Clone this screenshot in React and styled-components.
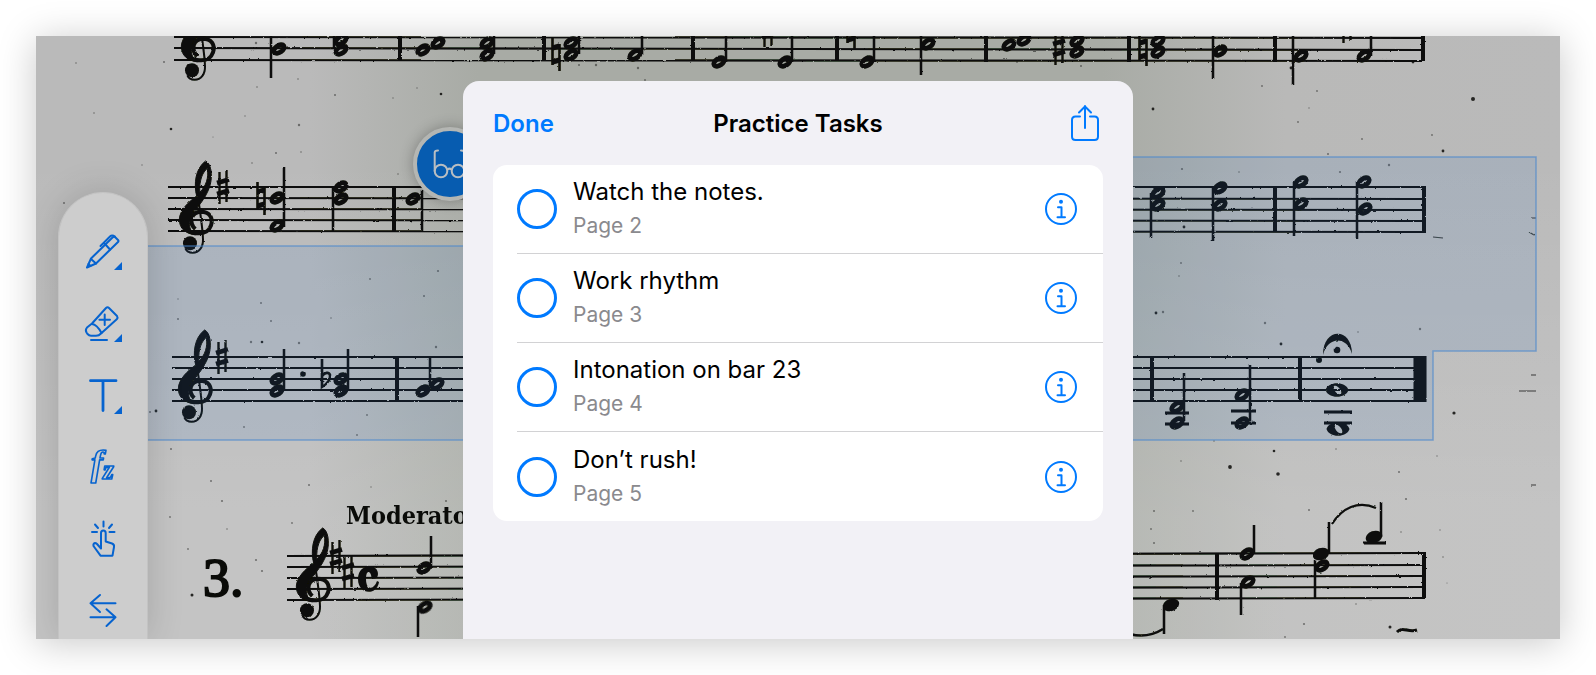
import React from "react";
import styled, { createGlobalStyle } from "styled-components";

const GlobalStyle = createGlobalStyle`
  *, *::before, *::after { box-sizing: border-box; }
  body {
    margin: 0;
    background: #ffffff;
    font-family: Inter, "Liberation Sans", sans-serif;
    -webkit-font-smoothing: antialiased;
  }
  button { font: inherit; border: 0; padding: 0; background: none; cursor: pointer; }
`;

const Page = styled.div`
  min-height: 100vh;
  padding: 36px;
  display: flex;
`;

const Screen = styled.main`
  position: relative;
  flex: 1;
  display: grid;
  grid-template-columns: 1fr minmax(0, 670px) 1fr;
  overflow: hidden;
  background:
    linear-gradient(180deg, rgba(255, 255, 255, 0) 20%, rgba(255, 255, 255, 0.15) 80%),
    linear-gradient(90deg, #bababa 0%, #bababa 18%, #a8aba5 29%, #a8aba5 70%, #b9b9b8 82%, #bababa 100%);
  box-shadow: 0 4px 36px rgba(0, 0, 0, 0.22);
`;

const Score = styled.svg`
  position: absolute;
  inset: 0;
  width: 100%;
  height: 100%;
`;

const Toolbar = styled.nav`
  position: relative;
  width: 90px;
  margin: 156px 0 0 22px;
  padding-top: 35px;
  display: flex;
  flex-direction: column;
  align-items: center;
  gap: 24px;
  background: #cdcdcd;
  border: 1px solid #c3c3c3;
  border-bottom: 0;
  border-radius: 45px 45px 0 0;
  box-shadow: 0 0 36px rgba(0, 0, 0, 0.16);
`;

const ToolButton = styled.button`
  width: 48px;
  height: 48px;
  flex: none;
  color: #0663cf;

  svg {
    display: block;
    overflow: visible;
    fill: none;
    stroke: currentColor;
    stroke-width: 2;
    stroke-linecap: round;
    stroke-linejoin: round;
  }
`;

const ViewBadge = styled.button`
  position: absolute;
  top: 91px;
  left: calc(50% - 385px);
  width: 74px;
  height: 74px;
  display: grid;
  place-items: center;
  border: 4px solid #b4b6b3;
  border-radius: 50%;
  background: #075cb0;
  box-shadow: 0 0 14px rgba(0, 0, 0, 0.28);
`;

const Dialog = styled.section`
  position: relative;
  grid-column: 2;
  margin-top: 45px;
  padding: 0 30px 118px;
  background: #f2f1f6;
  border-radius: 16px 16px 0 0;
`;

const DialogHeader = styled.header`
  height: 84px;
  display: grid;
  grid-template-columns: 1fr auto 1fr;
  align-items: center;
`;

const DialogTitle = styled.h1`
  margin: 0;
  font-size: 24px;
  line-height: 34px;
  padding-top: 2px;
  font-weight: 600;
  color: #000000;
`;

const DoneButton = styled.button`
  justify-self: start;
  font-size: 24px;
  line-height: 34px;
  padding-top: 2px;
  font-weight: 600;
  color: #007aff;
`;

const IconButton = styled.button`
  display: grid;
  place-items: center;
  justify-self: end;
  flex: none;
  width: 36px;
  height: 40px;
  color: #007aff;

  svg {
    display: block;
    fill: none;
    stroke: currentColor;
    stroke-width: 2;
    stroke-linecap: round;
    stroke-linejoin: round;
  }
`;

const TaskList = styled.ul`
  margin: 0;
  padding: 0 0 0 24px;
  list-style: none;
  background: #ffffff;
  border-radius: 14px;
`;

const TaskRow = styled.li`
  height: 89px;
  padding-right: 24px;
  display: flex;
  align-items: center;
  gap: 16px;

  &:not(:last-child) { border-bottom: 1px solid #d2d2d4; }
`;

const TaskCheck = styled.input`
  appearance: none;
  flex: none;
  width: 40px;
  height: 40px;
  margin: 0;
  border: 3px solid #007aff;
  border-radius: 50%;

  &:checked { background: #007aff; box-shadow: inset 0 0 0 4px #ffffff; }
`;

const TaskLabel = styled.label`
  flex: 1;
  display: flex;
  flex-direction: column;
`;

const TaskName = styled.span`
  font-size: 24px;
  line-height: 34px;
  color: #000000;
`;

const TaskPage = styled.span`
  font-size: 21px;
  line-height: 34px;
  color: #8a8a8e;
`;

/* ---------- sheet music ---------- */

const INK = "#0a0b08";

const Staff = ({ x1, x2, left, right }) =>
  left.map((y, i) => (
    <line key={i} x1={x1} x2={x2} y1={y} y2={right[i]} stroke={INK} strokeWidth="2.100" />
  ));

const Clef = ({ x, y }) => (
  <g transform={`translate(${x} ${y}) scale(.3333)`} fill="none" stroke={INK}>
    <path
      fill={INK}
      strokeWidth="3"
      fillRule="evenodd"
      d="M137 90C153 98 158 130 151 160C143 192 119 222 99 246C88 262 84 285 95 302L108 311C78 310 57 292 58 264C60 238 84 214 110 195C101 160 106 112 137 90ZM142 112C128 124 118 145 119 184C138 166 147 140 142 112Z"
    />
    <path strokeWidth="12" d="M106 294C86 277 92 243 122 242C150 242 160 262 153 283C147 300 138 306 118 307C100 308 90 303 84 297" />
    <path strokeWidth="6" d="M114 200C120 240 128 290 129 325C130 350 116 365 98 365C86 365 79 359 76 352" />
    <circle cx="90" cy="337" r="21" fill={INK} stroke="none" />
  </g>
);

const Sharp = ({ x, y }) => (
  <g transform={`translate(${x} ${y})`} stroke={INK}>
    <path strokeWidth="2.400" d="M-3.5 -15V17M3.5 -17V15" />
    <path strokeWidth="4.600" d="M-6 -4L6 -7.500M-6 7L6 3.500" />
  </g>
);

const Natural = ({ x, y }) => (
  <g transform={`translate(${x} ${y})`} stroke={INK}>
    <path strokeWidth="2.600" d="M-3.500 -16V11M3.500 -10V17" />
    <path strokeWidth="5" d="M-3.500 -6L3.500 -8M-3.500 8L3.500 6" />
  </g>
);

const Flat = ({ x, y }) => (
  <path transform={`translate(${x} ${y})`} fill="none" stroke={INK} strokeWidth="2.600" d="M-4 -17V11C1 8 5 3 4 -1C3 -4 -1 -4 -4 0" />
);

const Half = ({ x, y }) => (
  <ellipse rx="5.800" ry="3.400" fill="none" stroke={INK} strokeWidth="4.800" transform={`translate(${x} ${y}) rotate(-34)`} />
);

const Solid = ({ x, y }) => (
  <ellipse rx="8.500" ry="6" fill={INK} transform={`translate(${x} ${y}) rotate(-20)`} />
);

const Whole = ({ x, y }) => (
  <path
    transform={`translate(${x} ${y})`}
    fill={INK}
    fillRule="evenodd"
    d="M-11.500 0C-9 -9 9 -9 11.500 0C9 9 -9 9 -11.500 0ZM-3 -4C-5 -1 1 6 4 4C6 1 0 -6 -3 -4Z"
  />
);

const HALVES = [
  [279, 49], [341, 50], [341, 40], [423, 50], [438, 43], [487, 55], [487, 43], [571, 55], [571, 43],
  [635, 55], [719, 62], [785, 62], [867, 62], [928, 44], [1009, 45], [1024, 40], [1077, 52], [1077, 41],
  [1158, 52], [1158, 41], [1220, 51], [1301, 56], [1364, 56],
  [277, 198], [277, 226], [341, 187], [341, 199], [413, 199],
  [1158, 193], [1158, 205], [1220, 188], [1220, 205], [1301, 182], [1301, 204], [1364, 182], [1365, 209],
  [277, 379], [277, 391], [341, 379], [341, 391], [423, 391], [437, 384],
  [1177, 407], [1177, 423], [1242, 395], [1242, 423],
  [424, 568], [425, 607], [1247, 554], [1248, 582], [1322, 566],
];

const SOLIDS = [[1171, 605], [1321, 554], [1374, 537]];

/* x, top, bottom */
const STEMS = [
  [271, 36, 78], [334, 36, 49], [494, 36, 54], [579, 36, 54], [642, 36, 55], [726, 36, 62], [792, 36, 62],
  [874, 36, 62], [921, 36, 75], [1213, 36, 79], [1293, 36, 85], [1371, 36, 56], [284, 167, 227],
  [333, 187, 231], [422, 190, 231], [1151, 193, 238], [1213, 188, 241], [1294, 182, 236], [1357, 182, 239],
  [284, 349, 390], [348, 349, 391], [430, 357, 386], [1184, 373, 421], [1250, 365, 421],
  [431, 536, 567], [418, 606, 637], [1164, 605, 634], [1254, 525, 554], [1241, 583, 615],
  [1329, 522, 554], [1315, 560, 599], [1381, 502, 537],
];

const BARS = [
  [400, 36, 60], [544, 36, 61], [693, 36, 61], [837, 36, 61], [986, 36, 62], [1129, 36, 62], [1275, 36, 62],
  [1423, 36, 61], [394, 186, 232], [1275, 187, 232], [1424, 186, 232], [397, 357, 401], [1152, 356, 402],
  [1300, 356, 402], [1217, 553, 600], [1424, 553, 599],
];

/* x1, x2, y */
const LEDGERS = [
  [1165, 1189, 413], [1165, 1189, 424], [1231, 1256, 411], [1231, 1256, 423], [1324, 1352, 412],
  [1324, 1352, 423], [1363, 1386, 543],
];

/* x, y, radius */
const SPECKS = [
  [76, 63, 0.8], [164, 62, 1], [94, 113, 0.8], [171, 129, 1.3], [257, 87, 0.8], [298, 79, 0.8], [335, 95, 1],
  [299, 125, 1.2], [441, 94, 1.3], [276, 153, 1], [245, 116, 0.7], [252, 163, 0.8], [398, 174, 0.8],
  [142, 165, 0.7], [64, 203, 1], [213, 137, 0.6], [256, 43, 1.2], [417, 88, 0.7], [393, 98, 0.7], [301, 152, 0.8],
  [178, 319, 1], [178, 299, 0.7], [261, 303, 1], [271, 321, 1], [262, 342, 1.3], [251, 342, 1.2],
  [299, 343, 1.2], [370, 279, 0.9], [438, 271, 1.1], [424, 296, 1], [331, 318, 0.8], [436, 347, 1.2],
  [150, 412, 1], [156, 411, 1.4], [357, 435, 0.9], [244, 427, 0.9], [367, 415, 0.9], [171, 449, 1],
  [211, 481, 1], [222, 501, 1.1], [170, 517, 0.9], [192, 595, 1.5], [256, 560, 1.1], [262, 571, 1.1],
  [188, 549, 0.9], [227, 529, 0.8], [309, 485, 1], [292, 523, 0.9], [446, 501, 1.1], [371, 487, 0.7],
  [596, 65, 1.2], [579, 65, 1], [638, 68, 1.2], [645, 80, 0.9], [1017, 62, 0.9], [1081, 66, 1],
  [1153, 109, 1.4], [1473, 99, 2], [1291, 68, 1.4], [1413, 62, 1.4], [1317, 91, 0.9], [1262, 86, 0.9],
  [1298, 122, 0.9], [1309, 108, 0.7], [1432, 135, 0.9], [1328, 154, 1], [1362, 139, 0.9], [1389, 165, 1.2],
  [1182, 169, 1.1], [1340, 172, 1.1], [1184, 227, 1.4], [1443, 151, 1.4], [1239, 172, 0.8], [1181, 263, 0.9],
  [1179, 276, 0.8], [1156, 313, 1.4], [1163, 312, 1.2], [1265, 323, 1.2], [1420, 329, 1.2], [1281, 344, 1.4],
  [1358, 332, 0.8], [1454, 413, 1.6], [1274, 451, 1.3], [1230, 467, 1.9], [1278, 474, 1.8], [1399, 472, 1],
  [1336, 449, 0.8], [1437, 456, 0.7], [1154, 511, 1], [1193, 511, 0.9], [1151, 529, 0.9], [1309, 510, 1],
  [1406, 499, 1.1], [1401, 532, 0.8], [1154, 543, 1], [1304, 624, 1.1], [1390, 627, 1.5], [1356, 604, 0.8],
  [1440, 530, 0.7], [1443, 557, 0.8], [1447, 583, 0.6], [1285, 637, 0.9], [1214, 441, 0.8], [1181, 461, 0.8],
];

const SheetMusic = () => (
  <Score viewBox="36 36 1524 603" preserveAspectRatio="xMidYMid slice" role="img" aria-label="Sheet music">
    <defs>
      <filter id="press" x="36" y="20" width="1524" height="630" filterUnits="userSpaceOnUse">
        <feTurbulence type="fractalNoise" baseFrequency="0.3" numOctaves="2" seed="4" result="noise" />
        <feDisplacementMap in="SourceGraphic" in2="noise" scale="2" xChannelSelector="R" yChannelSelector="G" />
      </filter>
    </defs>
    <g filter="url(#press)">
      <Staff x1={174} x2={1424} left={[37, 48, 60]} right={[38, 50, 61]} />
      <Staff x1={168} x2={1426} left={[187, 198, 209, 220, 231]} right={[187, 199, 210, 221, 232]} />
      <Staff x1={172} x2={1426} left={[357, 368, 379, 390, 401]} right={[357, 368, 379, 390, 401]} />
      <Staff x1={287} x2={1426} left={[556, 567, 578, 589, 600]} right={[553, 565, 576, 587, 598]} />

      <Clef x={162} y={-42} />
      <Clef x={160} y={131} />
      <Clef x={159} y={300} />
      <Clef x={277} y={498} />

      <Sharp x={223} y={187} />
      <Sharp x={222} y={357} />
      <Sharp x={336} y={557} />
      <Sharp x={348} y={572} />
      <Sharp x={1059} y={48} />
      <Sharp x={768} y={30} />
      <Sharp x={1347} y={26} />
      <Natural x={261} y={198} />
      <Natural x={556} y={54} />
      <Natural x={851} y={32} />
      <Natural x={1143} y={49} />
      <Flat x={326} y={376} />

      {HALVES.map(([x, y], i) => <Half key={i} x={x} y={y} />)}
      {SOLIDS.map(([x, y], i) => <Solid key={i} x={x} y={y} />)}
      <Whole x={1337} y={390} />
      <Whole x={1338} y={429} />

      {STEMS.map(([x, a, b], i) => <line key={i} x1={x} x2={x} y1={a} y2={b} stroke={INK} strokeWidth="2.500" />)}
      {BARS.map(([x, a, b], i) => <line key={i} x1={x} x2={x} y1={a} y2={b} stroke={INK} strokeWidth="4" />)}
      {LEDGERS.map(([a, b, y], i) => <line key={i} x1={a} x2={b} y1={y} y2={y} stroke={INK} strokeWidth="3" />)}
      <line x1="1420" x2="1420" y1="356" y2="402" stroke={INK} strokeWidth="13" />

      <circle cx="303" cy="374" r="2.800" fill={INK} />
      <path fill={INK} d="M1323 355C1323 327 1352 327 1352 354C1347 336 1328 336 1323 355Z" />
      <circle cx="1337" cy="350" r="3.300" fill={INK} />
      <circle cx="1319" cy="360" r="3" fill={INK} />

      <path fill="none" stroke={INK} strokeWidth="2.200" d="M1332 524C1342 508 1358 500 1376 508" />
      <path fill="none" stroke={INK} strokeWidth="2.500" d="M1120 631C1137 638 1152 636 1163 629" />
      <path fill="none" stroke={INK} strokeWidth="3" d="M1397 632C1403 626 1408 633 1417 630" />
      <path fill="none" stroke={INK} strokeWidth="1.200" opacity=".7" d="M1433 237L1443 238M1529 232L1534 235M1532 218H1536M1519 391H1536M1531 375H1536M1531 485H1536" />

      <path
        fill={INK}
        fillRule="evenodd"
        d="M358 579C358 563 378 563 378 574C378 580 371 580 371 575C370 571 366 570 366 579C366 591 374 590 377 581L379 582C377 596 358 595 358 579Z"
      />
    </g>
    <text x="346" y="524" fill={INK} fontFamily='"DejaVu Serif Condensed", "DejaVu Serif", serif' fontWeight="700" fontSize="25">Moderato</text>
    <text x="203" y="596" fill={INK} stroke={INK} strokeWidth="2" fontFamily='"Liberation Serif", serif' fontSize="54">3.</text>
    {SPECKS.map(([x, y, r], i) => <circle key={i} cx={x} cy={y} r={r} fill={INK} opacity={r < 1.3 ? 0.45 : 0.85} />)}
    <path
      fill="rgba(50, 115, 195, 0.12)"
      stroke="rgba(75, 135, 205, 0.65)"
      strokeWidth="1.500"
      d="M140 246H700V157H1536V351H1433V440H140Z"
    />
  </Score>
);

/* ---------- toolbar icons ---------- */

const MenuCorner = () => <path d="M35 42H43V34Z" fill="currentColor" stroke="none" />;

const TOOLS = [
  {
    label: "Pen",
    icon: (
      <>
        <path d="M8 39.500L12 30.500L33.500 9.500Q35 8 36.500 9.500L39 12Q40 13 39 14L17 35.500Z" />
        <path d="M12 31L17 35.500M9.500 36L11.500 38M26 16L31 21.500M21.500 18L31 8.500Q33 6.500 36 8.500" />
        <MenuCorner />
      </>
    ),
  },
  {
    label: "Eraser",
    icon: (
      <>
        <path d="M13 23.500L27 8Q28.500 6.500 30 8L38 16Q39 17.500 38 19L22 33.500Q20 35.700 17 35.700H12Q10 35.700 8.500 34L7.500 32.500Q6 30 8 27.500Z" />
        <path d="M13 24Q18 24.500 22.500 33M25.700 14.500V25M20.400 19.700H31M12 40H28" />
        <MenuCorner />
      </>
    ),
  },
  {
    label: "Text",
    icon: (
      <>
        <path strokeWidth="2.800" d="M11.500 8.700H37M24 8.700V38.500" />
        <MenuCorner />
      </>
    ),
  },
  {
    label: "Dynamics",
    icon: (
      <g strokeWidth="1.600" fontFamily='"Liberation Serif", serif' fontStyle="italic" fontWeight="700">
        <text x="12" y="31" fontSize="36">f</text>
        <text x="24" y="35" fontSize="28">z</text>
      </g>
    ),
  },
  {
    label: "Tap",
    icon: (
      <>
        <path d="M24.500 5.500V10.500M16 8.500L19 12M33 8.500L30 12M13 16H18M30.500 16H35.500" />
        <path d="M22 32.500V17Q22 14.500 24.300 14.500Q26.700 14.500 26.700 17V25.500L33 27.500Q35.500 28.500 35 31L33.500 39.700H21.500L14.500 30Q14 27.500 16 27Q17 27 18 28Z" />
      </>
    ),
  },
  {
    label: "Swap",
    icon: <path d="M36.500 15.300H11.500M21 7L11.500 15.300L21 24M11.500 29.300H36.500M27.500 21.300L36.500 29.300L27.500 38" />,
  },
];

const TASKS = [
  { name: "Watch the notes.", page: 2 },
  { name: "Work rhythm", page: 3 },
  { name: "Intonation on bar 23", page: 4 },
  { name: "Don’t rush!", page: 5 },
];

const ShareIcon = () => (
  <svg width="28" height="36" viewBox="0 0 28 36" aria-hidden="true">
    <path d="M14 1V23M8 7.500L14 1.500L20 7.500M9 11.500H4.500Q1 11.500 1 15V31.500Q1 35 4.500 35H23.500Q27 35 27 31.500V15Q27 11.500 23.500 11.500H19" />
  </svg>
);

const InfoIcon = () => (
  <svg width="32" height="32" viewBox="0 0 32 32" aria-hidden="true">
    <circle cx="16" cy="16" r="15" />
    <circle cx="16" cy="8.700" r="2" fill="currentColor" stroke="none" />
    <path d="M13 14.300H16.500V24.300M12.500 24.300H20" />
  </svg>
);

const GlassesIcon = () => (
  <svg width="40" height="30" viewBox="0 0 40 30" fill="none" stroke="#b9bec2" strokeWidth="2" strokeLinecap="round" aria-hidden="true">
    <circle cx="11" cy="22" r="6.300" />
    <circle cx="28" cy="22" r="6.300" />
    <path d="M17.500 20.500Q19.500 18.800 21.500 20.500M4.700 22V3.500Q4.700 1.500 8 1.500M34.300 22V3.500Q34.300 1.500 31 1.500" />
  </svg>
);

export default function App() {
  return (
    <Page>
      <GlobalStyle />
      <Screen>
        <SheetMusic />
        <ViewBadge type="button" aria-label="Reading view">
          <GlassesIcon />
        </ViewBadge>
        <Toolbar aria-label="Annotation tools">
          {TOOLS.map((tool) => (
            <ToolButton key={tool.label} type="button" aria-label={tool.label}>
              <svg width="48" height="48" viewBox="0 0 48 48" aria-hidden="true">{tool.icon}</svg>
            </ToolButton>
          ))}
        </Toolbar>
        <Dialog role="dialog" aria-labelledby="dialog-title">
          <DialogHeader>
            <DoneButton type="button">Done</DoneButton>
            <DialogTitle id="dialog-title">Practice Tasks</DialogTitle>
            <IconButton type="button" aria-label="Share">
              <ShareIcon />
            </IconButton>
          </DialogHeader>
          <TaskList>
            {TASKS.map((task) => (
              <TaskRow key={task.page}>
                <TaskCheck type="checkbox" id={`task-${task.page}`} />
                <TaskLabel htmlFor={`task-${task.page}`}>
                  <TaskName>{task.name}</TaskName>
                  <TaskPage>Page {task.page}</TaskPage>
                </TaskLabel>
                <IconButton type="button" aria-label={`Details for ${task.name}`}>
                  <InfoIcon />
                </IconButton>
              </TaskRow>
            ))}
          </TaskList>
        </Dialog>
      </Screen>
    </Page>
  );
}
